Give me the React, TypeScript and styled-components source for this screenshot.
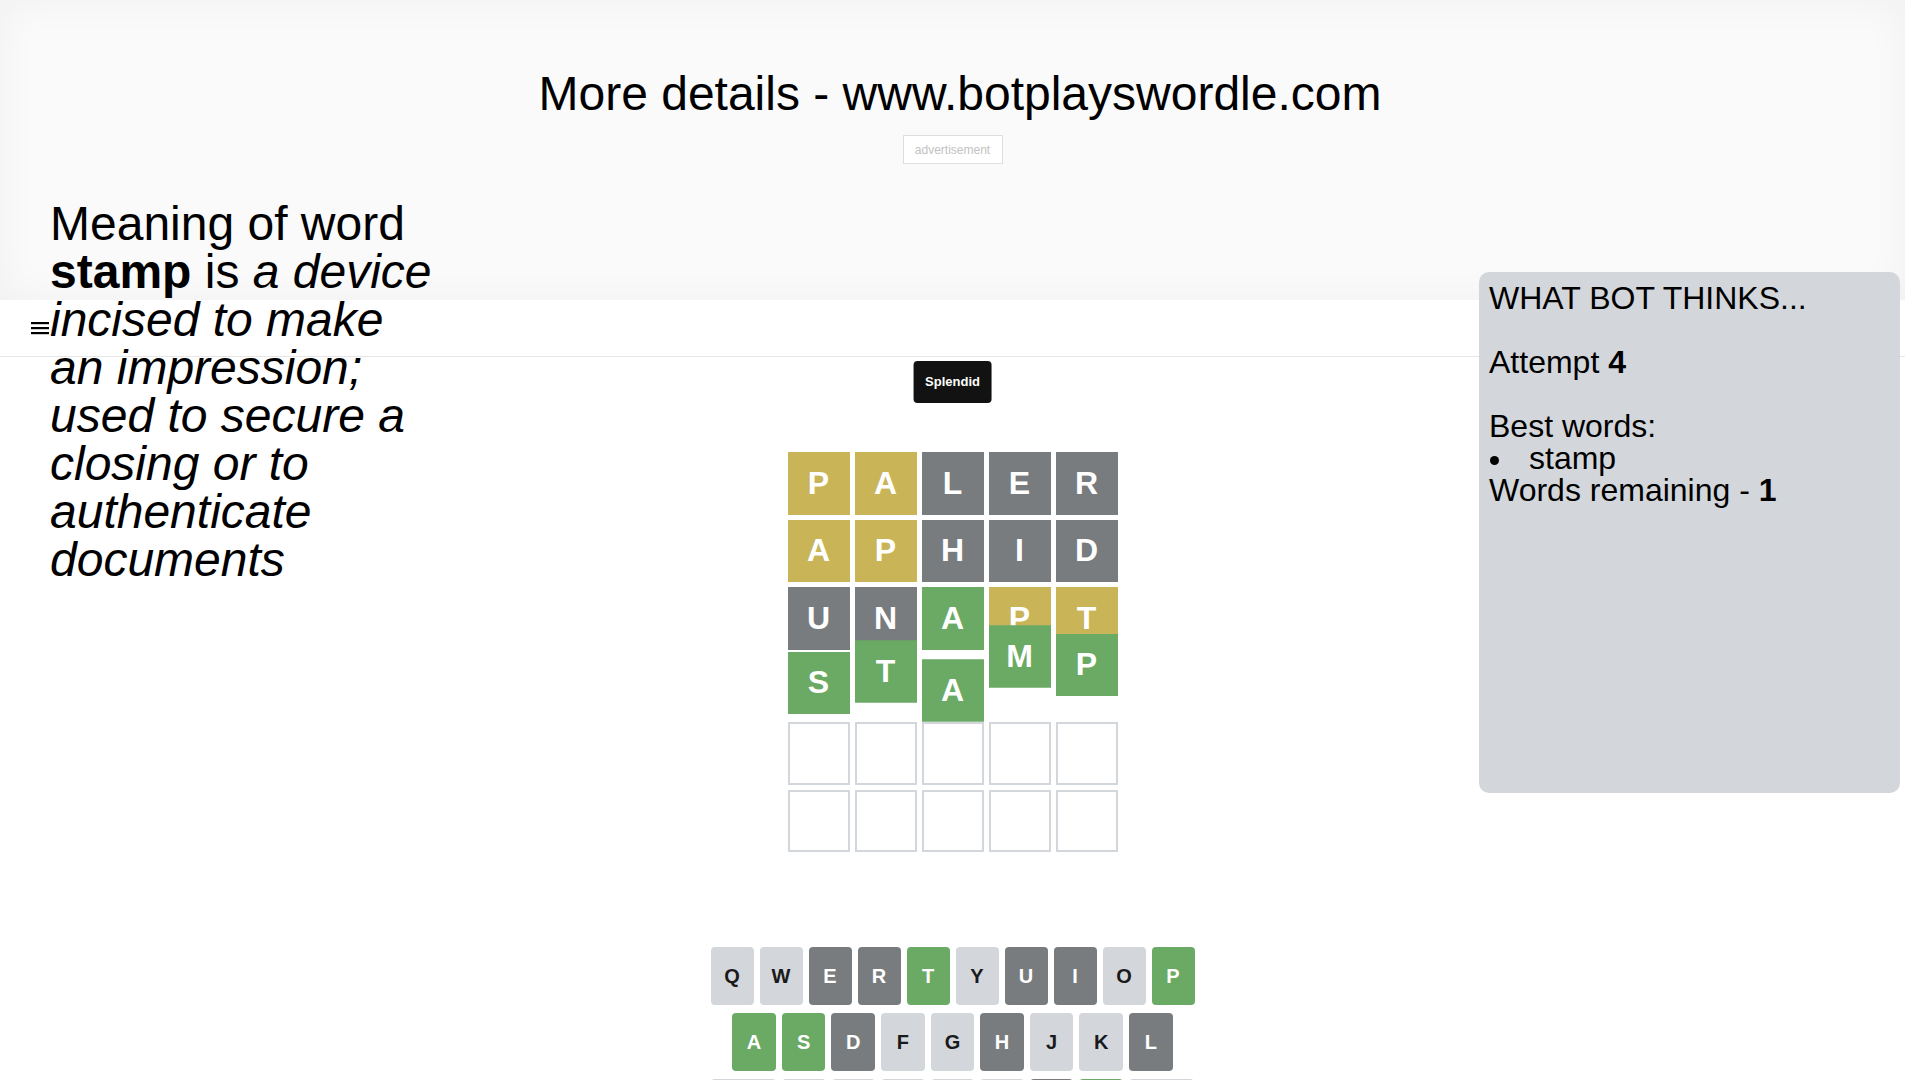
import React from "react";
import styled, { createGlobalStyle } from "styled-components";
import { Delete } from "lucide-react";

const GlobalStyle = createGlobalStyle`
  html, body {
    margin: 0;
    padding: 0;
    background: #fff;
    overflow: hidden;
  }
  body {
    font-family: "Liberation Sans", Arial, sans-serif;
    color: #000;
  }
`;

const COLORS = {
    present: "#c9b458",
    absent: "#787c7e",
    correct: "#6aaa64",
    empty: "#fff",
    light: "#d3d6da",
};

// scroll box standing in for the browser window, with classic scrollbars
const Viewport = styled.div`
  width: 100vw;
  height: 100vh;
  overflow: scroll;

  &::-webkit-scrollbar {
    width: 15px;
    height: 15px;
    background: #f1f1f1;
  }
  &::-webkit-scrollbar-track {
    background: #f1f1f1;
  }
  &::-webkit-scrollbar-thumb {
    background: #c1c1c1;
    border: 2px solid #f1f1f1;
  }
  &::-webkit-scrollbar-button:single-button {
    display: block;
    width: 15px;
    height: 15px;
    background: #f1f1f1;
  }
  &::-webkit-scrollbar-corner {
    background: #f1f1f1;
  }
`;

const Page = styled.div`
  position: relative;
  width: calc(100vw - 15px);
`;

const AdBand = styled.div`
  height: 300px;
  box-sizing: border-box;
  padding-top: 66px;
  background: #fafafa;
  box-shadow: inset 0 0 40px rgba(0, 0, 0, 0.045);
`;

const Title = styled.h1`
  width: 100vw;
  margin: 0;
  font-size: 48px;
  line-height: 56px;
  font-weight: normal;
  text-align: center;
`;

const AdSlot = styled.div`
  width: 100px;
  height: 29px;
  box-sizing: border-box;
  margin: 13px auto 0;
  border: 1px solid #dedede;
  background: #fff;
  display: flex;
  align-items: center;
  justify-content: center;
  font-size: 12px;
  color: #c2c2c2;
`;

const NavBar = styled.header`
  height: 56px;
  padding-left: 31px;
  border-bottom: 1px solid #e6e6e6;
  background: #fff;
  display: flex;
  align-items: center;
`;

const MenuIcon = () => (
    <svg width="18" height="14" viewBox="0 0 18 14">
        <rect x="0" y="1" width="18" height="2.2" fill="#000" />
        <rect x="0" y="6" width="18" height="2.2" fill="#000" />
        <rect x="0" y="11" width="18" height="2.2" fill="#000" />
    </svg>
);

const Game = styled.main`
  position: relative;
  width: 500px;
  margin: 0 auto;
  padding: 85px 0 219px;
`;

const Toast = styled.div`
  position: absolute;
  top: 4px;
  left: 50%;
  transform: translateX(-50%);
  padding: 13px 12px;
  background: #121212;
  color: #fff;
  border-radius: 4px;
  font-size: 13px;
  line-height: 16px;
  font-weight: bold;
  z-index: 5;
`;

const Board = styled.div`
  width: 350px;
  height: 420px;
  box-sizing: border-box;
  padding: 10px;
  margin: 0 auto;
  display: grid;
  grid-template-rows: repeat(6, 1fr);
  gap: 5px;
`;

const BoardRow = styled.div`
  display: grid;
  grid-template-columns: repeat(5, 1fr);
  gap: 5px;
`;

const Tile = styled.div<{ $state: string; $lift: number }>`
  display: flex;
  align-items: center;
  justify-content: center;
  box-sizing: border-box;
  border: 2px solid ${p => p.$state === "empty" ? COLORS.light : COLORS[p.$state]};
  background: ${p => COLORS[p.$state]};
  color: #fff;
  font-size: 32px;
  font-weight: bold;
  text-transform: uppercase;
  transform: translateY(${p => p.$lift}px);
`;

const Keyboard = styled.div`
  width: 500px;
  box-sizing: border-box;
  padding: 0 8px;
  margin-top: 85px;
`;

const KeyRow = styled.div`
  display: flex;
  width: 100%;
  margin: 0 auto 8px;
`;

const Key = styled.button<{ $state: string; $wide?: boolean }>`
  flex: ${p => p.$wide ? 1.5 : 1};
  height: 58px;
  margin: 0 6px 0 0;
  padding: 0;
  border: 0;
  border-radius: 4px;
  font-family: "Liberation Sans", Arial, sans-serif;
  font-weight: bold;
  font-size: ${p => p.$wide ? "12px" : "20px"};
  text-transform: uppercase;
  display: flex;
  align-items: center;
  justify-content: center;
  background: ${p => p.$state === "unused" ? COLORS.light : COLORS[p.$state]};
  color: ${p => p.$state === "unused" ? "#1a1a1b" : "#fff"};

  &:last-of-type {
    margin: 0;
  }
`;

const Spacer = styled.div`
  flex: 0.5;
`;

const Definition = styled.div`
  position: absolute;
  left: 50px;
  top: 200px;
  width: 390px;
  font-size: 48px;
  line-height: 48px;
`;

const BotPanel = styled.aside`
  position: absolute;
  top: 272px;
  right: 5px;
  width: 421px;
  height: 521px;
  box-sizing: border-box;
  padding: 10px;
  background: #d3d6da;
  border-radius: 10px;
  font-size: 32px;
  line-height: 32px;
`;

const PanelLine = styled.div<{ $gap?: boolean }>`
  margin-bottom: ${p => p.$gap ? "32px" : "0"};
`;

const WordList = styled.ul`
  list-style: none;
  margin: 0;
  padding: 0;
`;

const WordItem = styled.li`
  &::before {
    content: "";
    display: inline-block;
    width: 9px;
    height: 9px;
    margin: 0 30px 0 1px;
    border-radius: 50%;
    background: #000;
    vertical-align: 4px;
  }
`;

const guesses = [
    [["p", "present"], ["a", "present"], ["l", "absent"], ["e", "absent"], ["r", "absent"]],
    [["a", "present"], ["p", "present"], ["h", "absent"], ["i", "absent"], ["d", "absent"]],
    [["u", "absent"], ["n", "absent"], ["a", "correct"], ["p", "present"], ["t", "present"]],
    [["s", "correct"], ["t", "correct"], ["a", "correct"], ["m", "correct"], ["p", "correct"]],
];

// row 4 is caught mid-bounce
const bounce = [[0, 0, 0, 0, 0], [0, 0, 0, 0, 0], [0, 0, 0, 0, 0], [-3, -14.5, 4.5, -29.5, -21]];

const keyStates: Record<string, string> = {
    e: "absent", r: "absent", t: "correct", u: "absent", i: "absent", p: "correct",
    a: "correct", s: "correct", d: "absent", h: "absent", l: "absent",
    n: "absent", m: "correct",
};

const keyRows = ["qwertyuiop", "asdfghjkl", "zxcvbnm"];

export default function App() {
    const rows = [];
    for (let r = 0; r < 6; r++) {
        const guess = guesses[r];
        rows.push(
            <BoardRow key={r}>
                {[0, 1, 2, 3, 4].map(c => (
                    <Tile
                        key={c}
                        $state={guess ? guess[c][1] : "empty"}
                        $lift={bounce[r] ? bounce[r][c] : 0}
                    >
                        {guess ? guess[c][0] : ""}
                    </Tile>
                ))}
            </BoardRow>
        );
    }

    const renderKey = (k: string) => (
        <Key key={k} $state={keyStates[k] || "unused"}>{k}</Key>
    );

    return (
        <Viewport>
            <GlobalStyle />
            <Page>
                <AdBand>
                    <Title>More details - www.botplayswordle.com</Title>
                    <AdSlot>advertisement</AdSlot>
                </AdBand>
                <NavBar>
                    <MenuIcon />
                </NavBar>
                <Game>
                    <Toast>Splendid</Toast>
                    <Board>{rows}</Board>
                    <Keyboard>
                        <KeyRow>{keyRows[0].split("").map(renderKey)}</KeyRow>
                        <KeyRow>
                            <Spacer />
                            {keyRows[1].split("").map(renderKey)}
                            <Spacer />
                        </KeyRow>
                        <KeyRow>
                            <Key $state="unused" $wide>enter</Key>
                            {keyRows[2].split("").map(renderKey)}
                            <Key $state="unused" $wide><Delete size={24} /></Key>
                        </KeyRow>
                    </Keyboard>
                </Game>
                <Definition>
                    Meaning of word <b>stamp</b> is <i>a device incised to make an impression; used to secure a closing or to authenticate documents</i>
                </Definition>
                <BotPanel>
                    <PanelLine $gap>WHAT BOT THINKS...</PanelLine>
                    <PanelLine $gap>Attempt <b>4</b></PanelLine>
                    <PanelLine>Best words:</PanelLine>
                    <WordList>
                        <WordItem>stamp</WordItem>
                    </WordList>
                    <PanelLine>Words remaining - <b>1</b></PanelLine>
                </BotPanel>
            </Page>
        </Viewport>
    );
}
